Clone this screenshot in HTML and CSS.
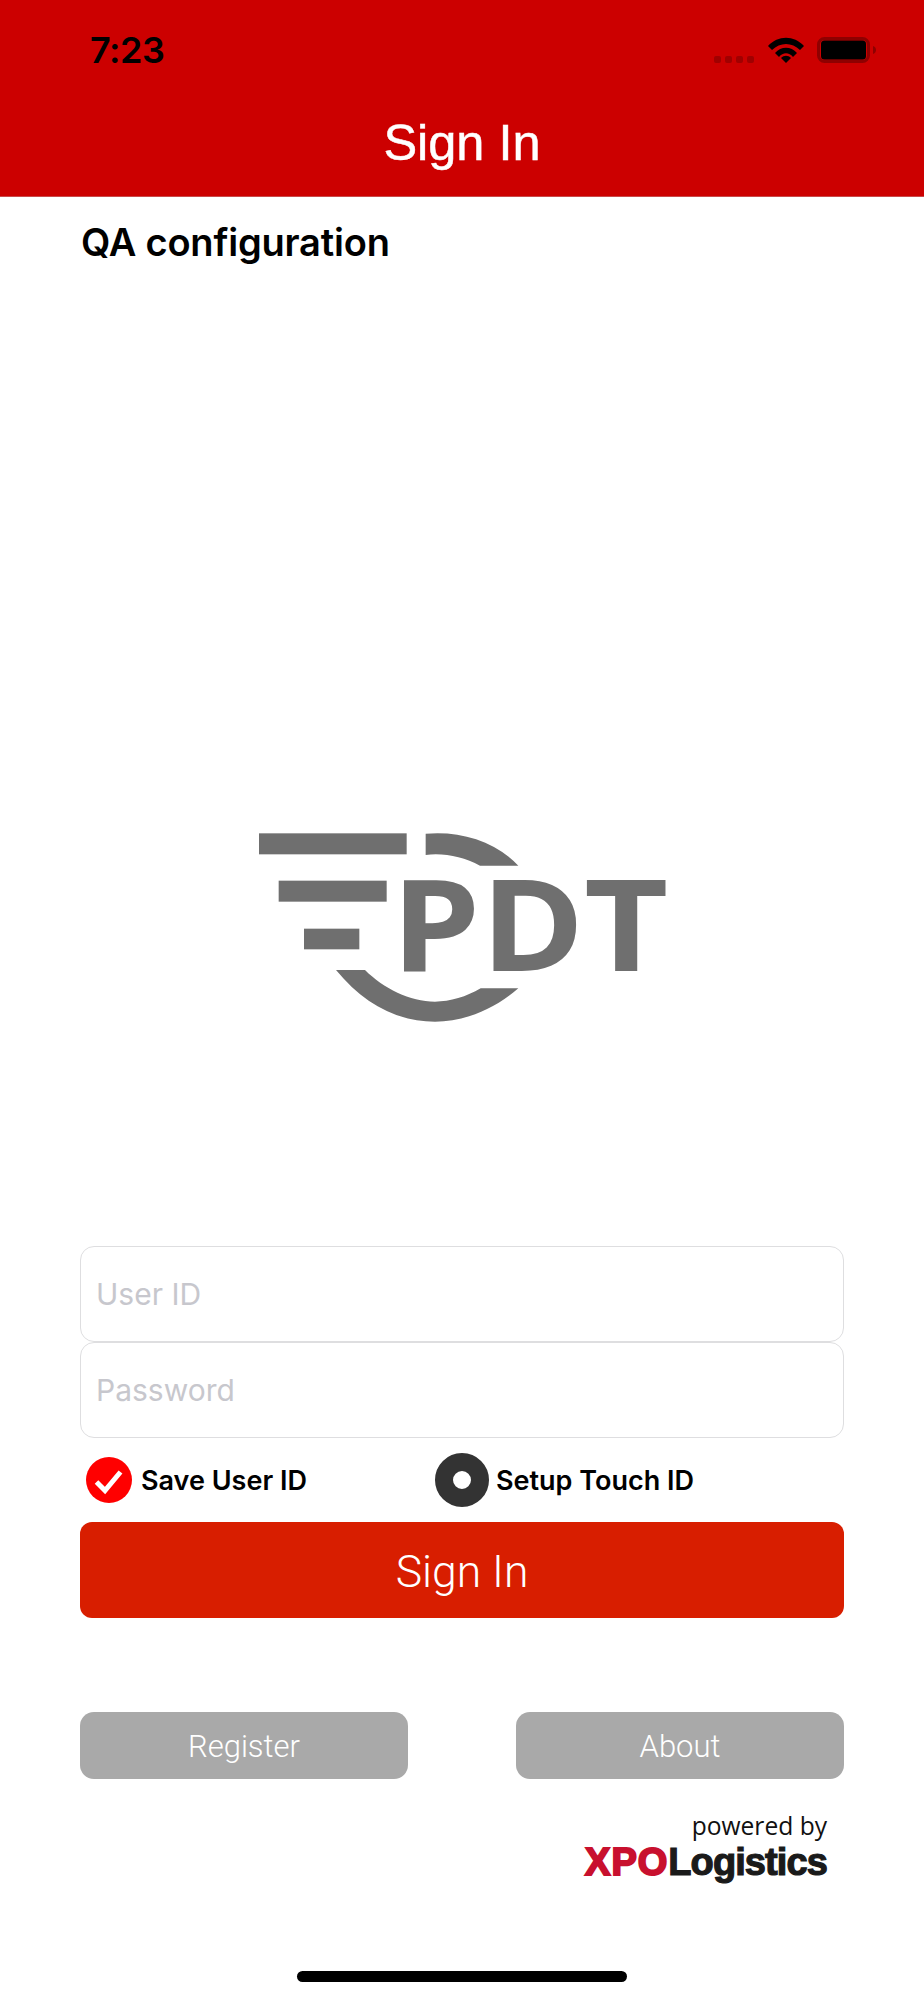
FILE: index.html
```html
<!DOCTYPE html>
<html lang="en">
<head>
<meta charset="utf-8">
<title>Sign In</title>
<link rel="stylesheet" href="styles.css">
</head>
<body>
<div class="phone">
  <header class="app-header">
    <div class="status-bar">
      <span class="clock">7:23</span>
      <div class="status-icons">
        <div class="signal"><i></i><i></i><i></i><i></i></div>
        <svg class="wifi" viewBox="0 0 36 26" width="36" height="26">
          <path d="M0 9 C10 -2 26 -2 36 9 L32 13 C24 5 12 5 4 13 Z"/>
          <path d="M7 16 C13 9 23 9 29 16 L25 20 C21 15 15 15 11 20 Z"/>
          <path d="M13 21 C16 18 20 18 23 21 L18 26 Z"/>
        </svg>
        <svg class="battery" viewBox="0 0 60 26" width="60" height="26">
          <rect x="1.5" y="1.5" width="50" height="23" rx="6" class="battery-shell"/>
          <rect x="4" y="3.5" width="45" height="19" rx="3.5" class="battery-fill"/>
          <path d="M56 9 C58.5 10 59 11.5 59 13 C59 14.5 58.5 16 56 17 Z" class="battery-nub"/>
        </svg>
      </div>
    </div>
    <h1 class="title">Sign In</h1>
  </header>
  <main class="content">
    <p class="config">QA configuration</p>
    <svg class="logo" viewBox="0 0 1320 675" width="440" height="225" role="img" aria-label="PDT">
      <rect x="57" y="70" width="443" height="63"/>
      <rect x="116" y="212" width="324" height="63"/>
      <rect x="192" y="356" width="166" height="62"/>
      <path d="M557 71 C660 62 765 92 835 167 L720 167 C670 140 610 128 557 135 Z"/>
      <path d="M288 480 L375 480 C430 535 510 575 585 575 C630 575 680 560 722 535 L835 535 C760 600 670 635 585 635 C470 635 370 580 288 480 Z"/>
      <text class="logo-text" transform="translate(454 483) scale(1.12 1)">P</text>
      <text class="logo-text" transform="translate(723 483) scale(1.1 1)">D</text>
      <text class="logo-text" transform="translate(1032 483) scale(1.15 1)">T</text>
    </svg>
    <form class="form">
      <div class="field">User ID</div>
      <div class="field">Password</div>
      <div class="options">
        <label class="option option-save">
          <svg class="check" viewBox="0 0 46 46" width="46" height="46">
            <circle cx="23" cy="23" r="23"/>
            <path d="M10.5 25 L19 33.5 L34.5 15"/>
          </svg>
          <span>Save User ID</span>
        </label>
        <label class="option option-touch">
          <span class="radio"></span>
          <span>Setup Touch ID</span>
        </label>
      </div>
      <button class="btn-primary" type="button">Sign In</button>
    </form>
    <div class="actions">
      <button class="btn-secondary" type="button">Register</button>
      <button class="btn-secondary" type="button">About</button>
    </div>
    <div class="credit">
      <span class="powered">powered by</span>
      <span class="brand"><span class="brand-xpo">XPO</span><span class="brand-log">Logistics</span></span>
    </div>
  </main>
  <div class="home-bar"></div>
</div>
</body>
</html>
```
FILE: styles.css
```css
* { box-sizing: border-box; }
html, body { margin: 0; padding: 0; background: #fff; }
.phone { width: 924px; height: 2000px; display: flex; flex-direction: column; overflow: hidden; font-family: Inter, "Liberation Sans", sans-serif; color: #000; }

.app-header { height: 197px; background: #cc0000; border-bottom: 1px solid #c94a4a; display: flex; flex-direction: column; }
.status-bar { display: flex; justify-content: space-between; align-items: flex-start; padding: 28px 47px 0 90px; height: 113px; }
.clock { font-size: 36px; line-height: 44px; font-weight: 600; letter-spacing: -0.5px; width: 80px; }
.status-icons { display: flex; align-items: flex-start; margin-top: 9px; }
.signal { display: flex; gap: 3.5px; margin-top: 19px; margin-right: 14px; }
.signal i { width: 7.5px; height: 7px; border-radius: 2px; background: #a00000; }
.wifi { fill: #000; margin-right: 13px; }
.battery-shell { fill: none; stroke: #8f0000; stroke-width: 3; }
.battery-fill { fill: #000; }
.battery-nub { fill: #8f0000; }
.title { margin: 0; text-align: center; font-family: "Liberation Sans", sans-serif; font-size: 50.5px; line-height: 60px; font-weight: 400; color: #fff; -webkit-text-stroke: 0.5px #fff; }

.content { display: flex; flex-direction: column; padding: 0 80px; }
.config { margin: 23px 0 0 1px; font-size: 38px; line-height: 44px; font-weight: 600; letter-spacing: -0.2px; }
.logo { display: block; margin: 546px 0 0 160px; fill: #6f6f6f; }
.logo-text { font-family: "Open Sans", sans-serif; font-weight: 700; font-size: 380px; }

.form { display: flex; flex-direction: column; margin-top: 211px; }
.field { height: 96px; margin-bottom: -0.5px; border: 1.5px solid #dedee0; border-radius: 14px; padding-left: 15px; display: flex; align-items: center; font-size: 30px; color: #c7c7cd; }
.options { height: 85px; display: flex; align-items: center; }
.option { display: flex; align-items: center; font-size: 27px; font-weight: 600; padding-top: 1px; }
.option-save { width: 349px; padding-left: 6px; gap: 9px; }
.option-touch { gap: 7px; margin-left: 6px; }
.check { display: block; }
.check circle { fill: #ff0000; }
.check path { fill: none; stroke: #fff; stroke-width: 5; }
.radio { width: 54px; height: 54px; border-radius: 50%; border: 18px solid #333; background: #fff; }

.btn-primary, .btn-secondary { display: block; border: 0; color: #fff; font-family: Roboto, sans-serif; font-weight: 300; }
.btn-primary { height: 96px; border-radius: 12px; background: #d81e00; font-size: 44.5px; padding: 3px 0 0; }
.actions { display: flex; justify-content: space-between; margin-top: 94px; }
.btn-secondary { width: 328px; height: 67px; border-radius: 14px; background: #a9a9a9; font-size: 31px; padding: 2px 0 0; }

.credit { display: flex; flex-direction: column; align-items: flex-end; padding-right: 17px; margin-top: 30px; }
.powered { font-family: "Open Sans", sans-serif; font-size: 24.6px; line-height: 34px; color: #111; }
.brand { font-family: "Liberation Sans", sans-serif; font-weight: 700; font-size: 38px; line-height: 36px; padding-top: 1px; }
.brand-xpo { color: #c8102e; -webkit-text-stroke: 2px #c8102e; letter-spacing: 1px; }
.brand-log { color: #1a1a1a; -webkit-text-stroke: 1.2px #1a1a1a; letter-spacing: -0.9px; }

.home-bar { width: 330px; height: 11px; border-radius: 5.5px; background: #000; margin: auto auto 18px; }
```
